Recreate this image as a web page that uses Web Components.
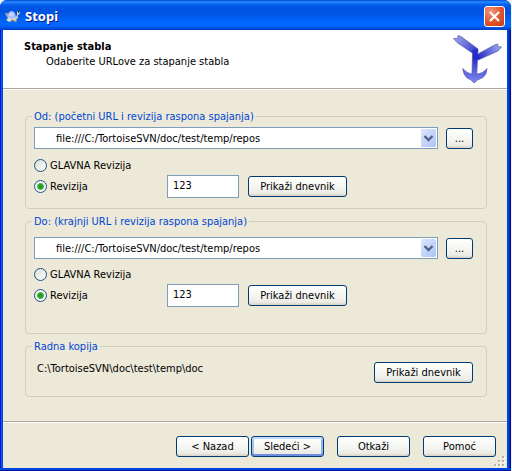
<!DOCTYPE html>
<html lang="sr-Latn">
<head>
<meta charset="utf-8">
<title>Stopi</title>
<style>
  html, body { margin: 0; }
  body {
    display: flex;
    min-height: 100vh;
    padding-right: 1px;
    box-sizing: border-box;
    background: #f4f2ec;
    color: #000;
    font: 11px/13px "DejaVu Sans Condensed", Tahoma, sans-serif;
  }
  .to { --space-top: 9px; --space-bottom: 26px; --space-above: 9px; }
  .copy { --space-top: 9px; --space-bottom: 13px; }
  wizard-footer > push-button { width: 73px; }
</style>
</head>
<body>

<template id="dialog-window">
  <style>
    :host {
      display: flex; flex-direction: column; flex: 1; min-width: 0;
      box-sizing: border-box;
      border-radius: 7px 7px 0 0;
      background: linear-gradient(90deg, #0019cf 0 1px, #0a5af2 1px 2px, #0045e0 2px 3px, #0042e4 3px calc(100% - 2px), #0024c0 calc(100% - 2px) calc(100% - 1px), #00138c calc(100% - 1px));
      overflow: hidden;
    }
    header {
      display: flex; align-items: center; gap: 5px;
      height: 30px; padding: 2px 6px 0 5px; box-sizing: border-box;
      background: linear-gradient(#0048d8 0, #2a8cff 2px, #0a66f0 4px, #0054e3 7px, #0055e5 14px, #0066ff 22px, #0066ff 26px, #0050e0 28px, #003bc4 30px);
    }
    h1 { flex: 1; margin: 0; color: #fff; font: bold 13px/18px "Noto Sans", "Trebuchet MS", sans-serif; text-shadow: 1px 1px 0 #0a1883; }
    header button { width: 21px; height: 21px; padding: 0; border: 1px solid #fff; border-radius: 3px; background: radial-gradient(circle at 30% 25%, #f0977c 0, #e2532c 55%, #c13a12 100%); }
    svg { display: block; }
    main { display: flex; flex-direction: column; flex: 1; margin: 0 4px 0 3px; background: #ece9d8; }
    .edge { height: 3px; background: linear-gradient(#0045e0 0 2px, #001a9c 2px); }
  </style>
  <header>
    <svg width="15" height="15" viewBox="0 0 15 15" aria-hidden="true">
      <path d="M0 4 L3 4 L4 9 L1 7Z" fill="#8f9ec0"/>
      <path d="M1 11.5 L3 8.500 H11 L12.500 9 L11.500 13 H9 V12 H6.500 V13 H4 L3.500 11.500Z" fill="#8b958c"/>
      <path d="M1.500 11 L3.500 9 H10.500 L11 11.500 H9.500 L8.500 10.500 H6 L5 12.500 H3.500Z" fill="#e6e8d6"/>
      <path d="M2.500 9 Q2.500 2 7 2 Q10.500 2.500 11 9 Q7 10 2.500 9Z" fill="#a9c0f8"/>
      <path d="M4 5.500 Q6 3 8 4 L8.500 6 L5.500 7Z" fill="#cbdafc"/>
      <path d="M10.500 9 L12 6 L12 3 L13.500 2 L15 3.500 L14.500 5 L13 6 L12.500 10Z" fill="#d4d9c9"/>
      <rect x="13" y="1" width="1" height="3" fill="#303830"/>
    </svg>
    <h1></h1>
    <button type="button" aria-label="Zatvori">
      <svg width="19" height="19" viewBox="0 0 19 19"><path d="M5 5 L14 14 M14 5 L5 14" stroke="#fff" stroke-width="2.200"/></svg>
    </button>
  </header>
  <main><slot></slot></main>
  <div class="edge"></div>
</template>

<template id="wizard-header">
  <style>
    :host {
      display: flex; justify-content: space-between;
      height: 58px; padding: 0 4px 0 21px;
      background: #fff; border-bottom: 1px solid #aca899; box-shadow: 0 1px 0 #fff;
    }
    h2 { margin: 10px 0 2px; font-size: 11px; line-height: 13px; }
    p { margin: 0 0 0 22px; }
    svg { display: block; margin-top: 5px; }
  </style>
  <div><h2><slot name="title"></slot></h2><p><slot></slot></p></div>
  <svg width="50" height="49" viewBox="0 0 50 49" aria-hidden="true">
    <defs>
      <linearGradient id="a" gradientUnits="userSpaceOnUse" x1="2" y1="2" x2="24" y2="18"><stop offset="0" stop-color="#9aa2ee"/><stop offset=".5" stop-color="#6a71da"/><stop offset="1" stop-color="#2b2fcb"/></linearGradient>
      <linearGradient id="b" gradientUnits="userSpaceOnUse" x1="47" y1="11" x2="24" y2="22"><stop offset="0" stop-color="#a0a8f0"/><stop offset=".5" stop-color="#6066da"/><stop offset="1" stop-color="#2024c4"/></linearGradient>
      <linearGradient id="c" gradientUnits="userSpaceOnUse" x1="0" y1="14" x2="0" y2="48"><stop offset="0" stop-color="#2a2ed0"/><stop offset=".25" stop-color="#2226cc"/><stop offset=".6" stop-color="#555be0"/><stop offset="1" stop-color="#7f88ee"/></linearGradient>
    </defs>
    <path d="M23 20 L42.500 9.500 L45 9 L44.500 11.500 L48.500 12 L45 16 L24 25.500Z" fill="url(#b)" stroke="#555ba8" stroke-width=".7"/>
    <path d="M.5 3.500 L4.500 3.500 L5 .5 L8 1.500 L25 14 L25 18 L20 18.500 L4 7.500Z" fill="url(#a)" stroke="#555ba8" stroke-width=".7"/>
    <path d="M19.500 15 L24.800 14 L24.500 24 L23.800 39 Q30 38.500 34 33.500 Q34 39 30 42.500 Q25 44 21 48 Q18 44 14 43 Q10 39 9.700 33.500 Q14 38.500 19 39Z" fill="url(#c)"/>
    <path d="M19.500 19 L19 39 Q14 38.500 9.700 33.500 Q10 39 14 43 Q18 44 21 48 Q25 44 30 42.500 Q34 39 34 33.500 Q30 38.500 23.800 39 L24.400 26" fill="none" stroke="#555ba8" stroke-width=".7"/>
  </svg>
</template>

<template id="group-box">
  <style>
    :host { display: block; }
    fieldset {
      min-width: 0; margin: 0; border: 1px solid #d0d0bf; border-radius: 4px;
      padding: var(--space-top, 4px) 13px var(--space-bottom, 10px) 8px;
    }
    legend { margin: 0 0 0 -2px; padding: 0 2px; color: #0046d5; }
  </style>
  <fieldset><legend></legend><slot></slot></fieldset>
</template>

<template id="push-button">
  <style>
    :host { display: block; flex: none; }
    button {
      display: block; width: 100%; height: 21px; padding: 0; box-sizing: border-box;
      border: 1px solid #003c74; border-radius: 3px;
      background: linear-gradient(#fff, #f3f3ef 60%, #ecebe5 85%, #d8d0c4);
      color: #000; font: inherit; line-height: 19px; white-space: nowrap;
    }
    :host([primary]) button { box-shadow: inset 0 2px 0 #c4dafc, inset 0 -2px 0 #6c8ee0, inset 2px 0 0 #a5c1f4, inset -2px 0 0 #96b2ee; }
  </style>
  <button type="button"><slot></slot></button>
</template>

<template id="url-picker">
  <style>
    :host { display: flex; align-items: flex-end; gap: 8px; }
    .combo { display: grid; flex: 1; min-width: 0; align-items: center; justify-items: end; }
    .combo > * { grid-area: 1 / 1; }
    select {
      width: 100%; height: 22px; box-sizing: border-box; padding: 1px 20px 0 21px; margin: 0;
      appearance: none; border: 1px solid #7f9db9; border-radius: 0; background: #fff; color: #000; font: inherit;
    }
    svg { margin-right: 2px; pointer-events: none; }
    push-button { width: 27px; }
  </style>
  <div class="combo">
    <select aria-label="URL"><option></option></select>
    <svg width="15" height="18" viewBox="0 0 15 18" aria-hidden="true">
      <defs><linearGradient id="g" x1="0" y1="0" x2="1" y2="1"><stop offset="0" stop-color="#dbe5fe"/><stop offset="1" stop-color="#aec4f6"/></linearGradient></defs>
      <rect width="15" height="18" rx="1.500" fill="url(#g)"/>
      <path d="M3.500 7 L7.500 11 L11.500 7" fill="none" stroke="#4d6185" stroke-width="2.400"/>
    </svg>
  </div>
  <push-button>...</push-button>
</template>

<template id="revision-picker">
  <style>
    :host { display: grid; grid-template-columns: 133px 72px 108px; align-items: center; row-gap: 3px; margin-top: var(--space-above, 10px); }
    .head { grid-column: 1 / -1; }
    label { display: flex; align-items: center; gap: 3px; }
    input[type=radio] {
      appearance: none; width: 13px; height: 13px; margin: 0; box-sizing: border-box;
      border: 1px solid #1d5281; border-radius: 50%; background: linear-gradient(135deg, #dcdcd7, #fff);
    }
    input[type=radio]:checked { background: radial-gradient(circle at 50% 50%, #21a121 0 2px, #55b855 3px, #f6f6f4 4px); }
    input[type=text] {
      width: 100%; height: 23px; box-sizing: border-box; padding: 0 5px 3px; margin: 0;
      border: 1px solid #7f9db9; border-radius: 0; background: #fff; color: #000; font: inherit;
    }
    push-button { margin-left: 9px; }
  </style>
  <label class="head"><input type="radio" name="rev">GLAVNA Revizija</label>
  <label><input type="radio" name="rev" checked>Revizija</label>
  <input type="text" aria-label="Broj revizije">
  <push-button>Prikaži dnevnik</push-button>
</template>

<template id="wizard-footer">
  <style>
    :host { display: block; margin-top: auto; border-top: 1px solid #aca899; box-shadow: inset 0 1px 0 #fff; }
    nav { display: flex; justify-content: flex-end; gap: 13px; padding: 14px 11px 0 0; }
    .pair { display: flex; gap: 2px; }
    .pair ::slotted(push-button) { width: 73px; }
    svg { display: block; margin: -1px 2px 1px auto; }
  </style>
  <nav><div class="pair"><slot name="steps"></slot></div><slot></slot></nav>
  <svg width="11" height="11" viewBox="0 0 11 11" aria-hidden="true">
    <path d="M9 1h2v2h-2z M5 5h2v2h-2z M9 5h2v2h-2z M1 9h2v2h-2z M5 9h2v2h-2z M9 9h2v2h-2z" fill="#fff"/>
    <path d="M8 0h2v2h-2z M4 4h2v2h-2z M8 4h2v2h-2z M0 8h2v2h-2z M4 8h2v2h-2z M8 8h2v2h-2z" fill="#b8b4a2"/>
  </svg>
</template>

<template id="wizard-page">
  <style>
    :host { display: flex; flex-direction: column; gap: 6px; padding: 21px 20px 0 22px; }
  </style>
  <slot></slot>
</template>

<template id="working-copy">
  <style>
    :host { display: flex; justify-content: space-between; align-items: flex-start; padding-left: 3px; }
    push-button { width: 99px; }
  </style>
  <span><slot></slot></span>
  <push-button>Prikaži dnevnik</push-button>
</template>

<script>
  const define = (name, setup) => customElements.define(name, class extends HTMLElement {
    constructor() {
      super();
      this.attachShadow({ mode: 'open' })
        .append(document.getElementById(name).content.cloneNode(true));
    }
    connectedCallback() { if (setup) setup(this, this.shadowRoot); }
  });
  define('push-button');
  define('dialog-window', (el, root) => { root.querySelector('h1').textContent = el.getAttribute('heading'); });
  define('wizard-header');
  define('wizard-page');
  define('group-box', (el, root) => { root.querySelector('legend').textContent = el.getAttribute('label'); });
  define('url-picker', (el, root) => { root.querySelector('option').textContent = el.getAttribute('url'); });
  define('revision-picker', (el, root) => { root.querySelector('[type=text]').value = el.getAttribute('revision'); });
  define('working-copy');
  define('wizard-footer');
</script>

<dialog-window heading="Stopi">
  <wizard-header><span slot="title">Stapanje stabla</span>Odaberite URLove za stapanje stabla</wizard-header>
  <wizard-page>
    <group-box label="Od: (početni URL i revizija raspona spajanja)">
      <url-picker url="file:///C:/TortoiseSVN/doc/test/temp/repos"></url-picker>
      <revision-picker revision="123"></revision-picker>
    </group-box>
    <group-box class="to" label="Do: (krajnji URL i revizija raspona spajanja)">
      <url-picker url="file:///C:/TortoiseSVN/doc/test/temp/repos"></url-picker>
      <revision-picker revision="123"></revision-picker>
    </group-box>
    <group-box class="copy" label="Radna kopija">
      <working-copy>C:\TortoiseSVN\doc\test\temp\doc</working-copy>
    </group-box>
  </wizard-page>
  <wizard-footer>
    <push-button slot="steps">&lt; Nazad</push-button>
    <push-button slot="steps" primary>Sledeći &gt;</push-button>
    <push-button>Otkaži</push-button>
    <push-button>Pomoć</push-button>
  </wizard-footer>
</dialog-window>
</body>
</html>
